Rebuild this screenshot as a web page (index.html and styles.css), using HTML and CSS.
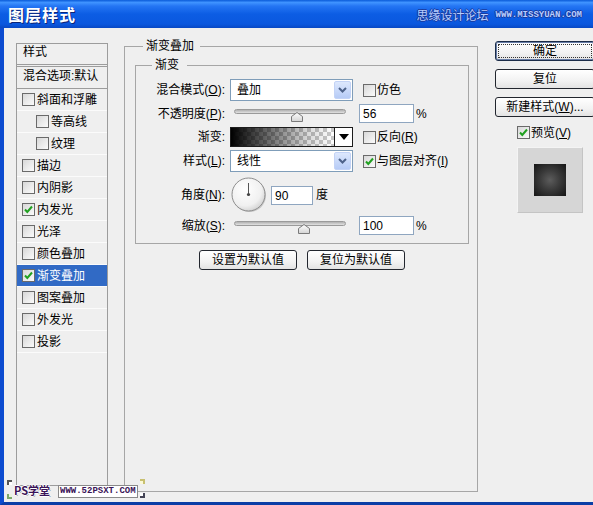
FILE: index.html
```html
<!DOCTYPE html>
<html>
<head>
<meta charset="utf-8">
<link rel="stylesheet" href="styles.css">
</head>
<body>
<div class="win">
  <div class="titlebar">
    <span class="title">图层样式</span>
    <span class="brand"><span class="brand-cn">思缘设计论坛</span><span class="brand-en">WWW.MISSYUAN.COM</span></span>
  </div>
  <div class="frame">
    <div class="content">
      <div class="list">
        <div class="list-head">样式</div>
        <div class="list-blend">混合选项:默认</div>
        <div class="item"><span class="cb"></span>斜面和浮雕</div>
        <div class="item sub"><span class="cb"></span>等高线</div>
        <div class="item sub"><span class="cb"></span>纹理</div>
        <div class="item"><span class="cb"></span>描边</div>
        <div class="item"><span class="cb"></span>内阴影</div>
        <div class="item"><span class="cb"><svg viewBox="0 0 11 11" class="tick"><path d="M2 5.5 L4.3 8 L9 2.5"/></svg></span>内发光</div>
        <div class="item"><span class="cb"></span>光泽</div>
        <div class="item"><span class="cb"></span>颜色叠加</div>
        <div class="item active"><span class="cb"><svg viewBox="0 0 11 11" class="tick"><path d="M2 5.5 L4.3 8 L9 2.5"/></svg></span>渐变叠加</div>
        <div class="item"><span class="cb"></span>图案叠加</div>
        <div class="item"><span class="cb"></span>外发光</div>
        <div class="item"><span class="cb"></span>投影</div>
      </div>

      <div class="group main-group">
        <div class="group-head"><span class="gl gl-main"></span><span class="gt gt-main">渐变叠加</span><span class="gr"></span></div>
        <div class="group-body main-body">
          <div class="group inner-group">
            <div class="group-head"><span class="gl gl-inner"></span><span class="gt gt-inner">渐变</span><span class="gr"></span></div>
            <div class="group-body inner-body">
              <div class="row r1">
                <span class="lbl">混合模式(<u>O</u>):</span>
                <div class="select"><span class="sel-text">叠加</span><span class="sel-btn"><svg viewBox="0 0 9 6" class="chev"><path d="M1 1 L4.5 4.5 L8 1"/></svg></span></div>
                <span class="check"><span class="cb"></span>仿色</span>
              </div>
              <div class="row r2">
                <span class="lbl">不透明度(<u>P</u>):</span>
                <div class="slider"><span class="track"></span><svg class="thumb" style="left:61px" viewBox="0 0 12 10"><defs><linearGradient id="tg1" x1="0" y1="0" x2="0" y2="1"><stop offset="0" stop-color="#ffffff"/><stop offset="1" stop-color="#d4d4d4"/></linearGradient></defs><path d="M0.5 4.5 L6 0.5 L11.5 4.5 L11.5 9.5 L0.5 9.5 Z" fill="url(#tg1)" stroke="#7a7a7a"/></svg></div>
                <span class="num">56</span><span class="unit">%</span>
              </div>
              <div class="row r3">
                <span class="lbl">渐变:</span>
                <div class="grad"><span class="grad-fill"></span><span class="grad-btn"><svg viewBox="0 0 10 6" class="tri"><path d="M0 0 L10 0 L5 6 Z"/></svg></span></div>
                <span class="check"><span class="cb"></span>反向(<u>R</u>)</span>
              </div>
              <div class="row r4">
                <span class="lbl">样式(<u>L</u>):</span>
                <div class="select"><span class="sel-text">线性</span><span class="sel-btn"><svg viewBox="0 0 9 6" class="chev"><path d="M1 1 L4.5 4.5 L8 1"/></svg></span></div>
                <span class="check"><span class="cb"><svg viewBox="0 0 11 11" class="tick"><path d="M2 5.5 L4.3 8 L9 2.5"/></svg></span>与图层对齐(<u>I</u>)</span>
              </div>
              <div class="row r5">
                <span class="lbl">角度(<u>N</u>):</span>
                <svg class="dial" viewBox="0 0 36 36"><defs><radialGradient id="dg" cx="0.4" cy="0.35" r="0.7"><stop offset="0" stop-color="#ffffff"/><stop offset="0.7" stop-color="#f0f0f0"/><stop offset="1" stop-color="#cfcfcf"/></radialGradient></defs><circle cx="18.5" cy="18.5" r="16.5" fill="#c8c8c8"/><circle cx="17.5" cy="17.5" r="16.5" fill="url(#dg)" stroke="#8d8d8d"/><path d="M17.5 17.5 L17.5 6" stroke="#555" stroke-width="1"/><circle cx="17.5" cy="17.5" r="1.6" fill="#444"/></svg>
                <span class="num num-angle">90</span><span class="unit unit-deg">度</span>
              </div>
              <div class="row r6">
                <span class="lbl">缩放(<u>S</u>):</span>
                <div class="slider"><span class="track"></span><svg class="thumb" style="left:68px" viewBox="0 0 12 10"><defs><linearGradient id="tg2" x1="0" y1="0" x2="0" y2="1"><stop offset="0" stop-color="#ffffff"/><stop offset="1" stop-color="#d4d4d4"/></linearGradient></defs><path d="M0.5 4.5 L6 0.5 L11.5 4.5 L11.5 9.5 L0.5 9.5 Z" fill="url(#tg2)" stroke="#7a7a7a"/></svg></div>
                <span class="num">100</span><span class="unit">%</span>
              </div>
            </div>
          </div>
          <div class="defaults">
            <span class="btn btn-def">设置为默认值</span>
            <span class="btn btn-def">复位为默认值</span>
          </div>
        </div>
      </div>

      <div class="side">
        <span class="btn btn-side btn-ok">确定</span>
        <span class="btn btn-side">复位</span>
        <span class="btn btn-side">新建样式(<u>W</u>)...</span>
        <span class="check prev-check"><span class="cb"><svg viewBox="0 0 11 11" class="tick"><path d="M2 5.5 L4.3 8 L9 2.5"/></svg></span>预览(<u>V</u>)</span>
        <div class="preview"><span class="swatch"></span></div>
      </div>
    </div>
  </div>

  <div class="wm">
    <span class="mark mk-tl"></span><span class="mark mk-bl"></span><span class="mark mk-tr"></span><span class="mark mk-br"></span>
    <span class="wm-cn">PS学堂</span><span class="wm-en">WWW.52PSXT.COM</span>
  </div>
</div>
</body>
</html>
```

FILE: styles.css
```css
html, body {
  margin: 0;
  padding: 0;
}
body {
  width: 593px;
  height: 505px;
  overflow: hidden;
  background: #efefef;
}
.win {
  position: relative;
  width: 593px;
  height: 505px;
  font-family: "Liberation Sans", "Noto Sans CJK SC", sans-serif;
  font-size: 12px;
  line-height: 14px;
  color: #000;
  background: #efefef;
}
u { text-decoration: underline; }

/* title bar */
.titlebar {
  height: 28px;
  box-sizing: border-box;
  padding: 0 11px 0 8px;
  display: flex;
  align-items: center;
  justify-content: space-between;
  background: linear-gradient(to bottom, #0a5bd9 0%, #3f93ff 9%, #2475f3 22%, #0c5de4 50%, #0a57de 86%, #0848c4 100%);
}
.title {
  font-family: "Noto Sans CJK SC", sans-serif;
  font-size: 16px;
  font-weight: bold;
  letter-spacing: 1px;
  color: #fff;
  line-height: 20px;
  text-shadow: 1px 1px 0 #0a2478;
}
.brand {
  display: flex;
  align-items: center;
  margin-top: 1px;
}
.brand-cn {
  font-family: "Noto Sans CJK SC", sans-serif;
  font-size: 12px;
  color: #b7ceff;
  text-shadow: 1px 0 0 #1b3b9e, -1px 0 0 #1b3b9e, 0 1px 0 #1b3b9e, 0 -1px 0 #1b3b9e;
}
.brand-en {
  margin-left: 7px;
  font-family: "Liberation Mono", monospace;
  font-size: 9px;
  font-weight: bold;
  color: #b7ceff;
  text-shadow: 1px 0 0 #1b3b9e, -1px 0 0 #1b3b9e, 0 1px 0 #1b3b9e, 0 -1px 0 #1b3b9e;
}

/* frame */
.frame {
  height: 477px;
  box-sizing: border-box;
  border-left: 4px solid #0c4cd0;
  border-bottom: 3px solid #0a3ea6;
  display: flex;
}
.content {
  flex: 1;
  display: flex;
  align-items: flex-start;
  padding-left: 12px;
  overflow: hidden;
}

/* style list */
.list {
  flex-shrink: 0;
  margin-top: 15px;
  width: 92px;
  height: 443px;
  box-sizing: border-box;
  border: 1px solid #9c9c9c;
}
.list-head {
  height: 21px;
  box-sizing: border-box;
  border-bottom: 1px solid #9c9c9c;
  padding: 1px 0 0 6px;
  margin-bottom: 1px;
}
.list-blend {
  height: 23px;
  box-sizing: border-box;
  border-top: 1px solid #9c9c9c;
  border-bottom: 1px solid #9c9c9c;
  padding: 2px 0 0 6px;
  white-space: nowrap;
}
.item {
  height: 22px;
  box-sizing: border-box;
  border-bottom: 1px solid #fbfbfb;
  display: flex;
  align-items: center;
  padding-left: 5px;
  white-space: nowrap;
}
.item .cb { margin-right: 2px; }
.item.sub { padding-left: 19px; }
.item.active {
  background: #316ac5;
  color: #fff;
}

/* checkbox */
.cb {
  flex-shrink: 0;
  width: 13px;
  height: 13px;
  box-sizing: border-box;
  border: 1px solid #6a6a6a;
  background: linear-gradient(135deg, #d8d8d8, #fbfbfb);
  display: inline-flex;
  align-items: center;
  justify-content: center;
}
.tick {
  width: 11px;
  height: 11px;
}
.tick path {
  fill: none;
  stroke: #21a121;
  stroke-width: 2;
}

/* group boxes */
.group-head {
  display: flex;
  height: 14px;
}
.gl {
  flex-shrink: 0;
  margin-top: 7px;
  height: 7px;
  box-sizing: border-box;
  border-top: 1px solid #a6a6a6;
  border-left: 1px solid #a6a6a6;
}
.gr {
  flex: 1;
  margin-top: 7px;
  height: 7px;
  box-sizing: border-box;
  border-top: 1px solid #a6a6a6;
  border-right: 1px solid #a6a6a6;
}
.gt { white-space: nowrap; }
.group-body {
  box-sizing: border-box;
  border: 1px solid #a6a6a6;
  border-top: none;
}
.main-group {
  flex-shrink: 0;
  margin-left: 16px;
  margin-top: 11px;
  width: 354px;
}
.gl-main { width: 19px; }
.gt-main { padding: 0 6px 0 3px; }
.main-body {
  height: 439px;
  padding: 5px 8px 0 10px;
}
.gl-inner { width: 17px; }
.gt-inner { padding: 0 8px 0 3px; }
.inner-body {
  padding: 7px 0 8px 0;
}

/* rows */
.row {
  display: flex;
  align-items: center;
  white-space: nowrap;
}
.r1 { height: 22px; margin-bottom: 3px; }
.r2 { height: 19px; margin-bottom: 4px; }
.r3 { height: 20px; margin-bottom: 3px; }
.r4 { height: 22px; margin-bottom: 6px; }
.r5 { height: 34px; margin-bottom: 4px; }
.r6 { height: 19px; }
.lbl {
  flex-shrink: 0;
  width: 89px;
  margin-right: 5px;
  text-align: right;
}
.select {
  flex-shrink: 0;
  width: 123px;
  height: 22px;
  box-sizing: border-box;
  border: 1px solid #7f9db9;
  background: #fff;
  display: flex;
  align-items: center;
}
.sel-text {
  flex: 1;
  padding-left: 6px;
}
.sel-btn {
  width: 17px;
  height: 18px;
  margin-right: 1px;
  box-sizing: border-box;
  border: 1px solid #c3d3f6;
  border-radius: 2px;
  background: linear-gradient(to bottom, #dde8fd, #b6cbf6);
  display: flex;
  align-items: center;
  justify-content: center;
}
.chev {
  width: 9px;
  height: 6px;
}
.chev path {
  fill: none;
  stroke: #4d6289;
  stroke-width: 2;
}
.check {
  display: inline-flex;
  align-items: center;
  margin-left: 10px;
}
.check .cb { margin-right: 1px; }

.slider {
  position: relative;
  flex-shrink: 0;
  width: 123px;
  height: 19px;
}
.track {
  position: absolute;
  left: 4px;
  top: 5px;
  width: 112px;
  height: 5px;
  box-sizing: border-box;
  border: 1px solid #9a9a9a;
  border-radius: 3px;
  background: linear-gradient(to bottom, #b0b0b0, #e2e2e2);
}
.thumb {
  position: absolute;
  top: 8px;
  width: 12px;
  height: 10px;
}
.num {
  flex-shrink: 0;
  margin-left: 6px;
  width: 55px;
  height: 19px;
  box-sizing: border-box;
  border: 1px solid #8fa6c0;
  background: #fff;
  padding: 2px 0 0 3px;
  line-height: 14px;
}
.num-angle { width: 42px; }
.unit { margin-left: 2px; }
.unit-deg { margin-left: 3px; }

.grad {
  flex-shrink: 0;
  width: 123px;
  height: 20px;
  box-sizing: border-box;
  border: 1px solid #1c1c1c;
  display: flex;
}
.grad-fill {
  flex: 1;
  background:
    linear-gradient(to right, #000 0%, rgba(0, 0, 0, 0.6) 35%, rgba(0, 0, 0, 0.15) 75%, rgba(0, 0, 0, 0) 100%),
    repeating-conic-gradient(#c9c9c9 0 25%, #ffffff 0 50%) 0 0 / 8px 8px;
}
.grad-btn {
  width: 17px;
  border-left: 1px solid #1c1c1c;
  background: #fff;
  display: flex;
  align-items: center;
  justify-content: center;
}
.tri {
  width: 10px;
  height: 6px;
  fill: #000;
}
.dial {
  flex-shrink: 0;
  margin-left: 1px;
  width: 36px;
  height: 36px;
}
.r5 .num-angle { margin-left: 4px; }

.defaults {
  margin-top: 6px;
  display: flex;
  justify-content: center;
  gap: 10px;
}
.btn {
  display: flex;
  align-items: center;
  justify-content: center;
  height: 20px;
  box-sizing: border-box;
  border: 1px solid #22262e;
  border-radius: 3px;
  background: linear-gradient(to bottom, #ffffff, #f2f2f2 60%, #e3e3e3);
  white-space: nowrap;
}
.btn-def { width: 98px; }

/* right side */
.side {
  flex-shrink: 0;
  margin-left: 17px;
  margin-top: 13px;
  width: 100px;
  display: flex;
  flex-direction: column;
}
.btn-side {
  width: 100px;
  margin-bottom: 8px;
}
.btn-ok {
  border-color: #1b2c48;
  box-shadow: inset 0 0 0 1px #6a7fa8;
  outline: 1px dotted #333;
  outline-offset: -4px;
}
.prev-check {
  margin-left: 22px;
  margin-top: 1px;
  height: 13px;
}
.preview {
  margin-left: 22px;
  margin-top: 8px;
  width: 66px;
  height: 66px;
  box-sizing: border-box;
  border: 1px solid #f4f4f4;
  border-right-color: #c4c4c4;
  border-bottom-color: #c4c4c4;
  background: #d6d6d6;
  display: flex;
  align-items: center;
  justify-content: center;
}
.swatch {
  width: 32px;
  height: 32px;
  background: radial-gradient(circle at 50% 50%, #5c5c5c 0%, #3a3a3a 45%, #151515 100%);
}

/* watermark overlay */
.wm {
  position: absolute;
  left: 0;
  top: 476px;
  width: 160px;
  height: 26px;
}
.mark {
  position: absolute;
  width: 5px;
  height: 5px;
  box-sizing: border-box;
}
.mk-tl { left: 7px; top: 4px; border-top: 2px solid #555; border-left: 2px solid #555; background: #fff; }
.mk-bl { left: 7px; top: 18px; border-bottom: 2px solid #7ca86a; border-left: 2px solid #7ca86a; background: #eaf3e0; }
.mk-tr { left: 140px; top: 3px; border-top: 2px solid #c8c070; border-right: 2px solid #c8c070; background: #fbf8d8; }
.mk-br { left: 140px; top: 17px; border-bottom: 2px solid #445; border-right: 2px solid #445; background: #fff; }
.wm-cn {
  position: absolute;
  left: 14px;
  top: 7px;
  font-family: "Noto Sans CJK SC", sans-serif;
  font-size: 11px;
  font-weight: bold;
  line-height: 14px;
  color: #3a1458;
  text-shadow: 1px 0 0 #fff, -1px 0 0 #fff, 0 1px 0 #fff, 0 -1px 0 #fff, 1px 1px 0 #999;
}
.wm-en {
  position: absolute;
  left: 58px;
  top: 9px;
  height: 11px;
  padding: 0 1px;
  border: 1px solid #8a8a8a;
  background: #fff;
  font-family: "Liberation Mono", monospace;
  font-size: 9px;
  font-weight: bold;
  line-height: 11px;
  color: #3a1458;
}
```
